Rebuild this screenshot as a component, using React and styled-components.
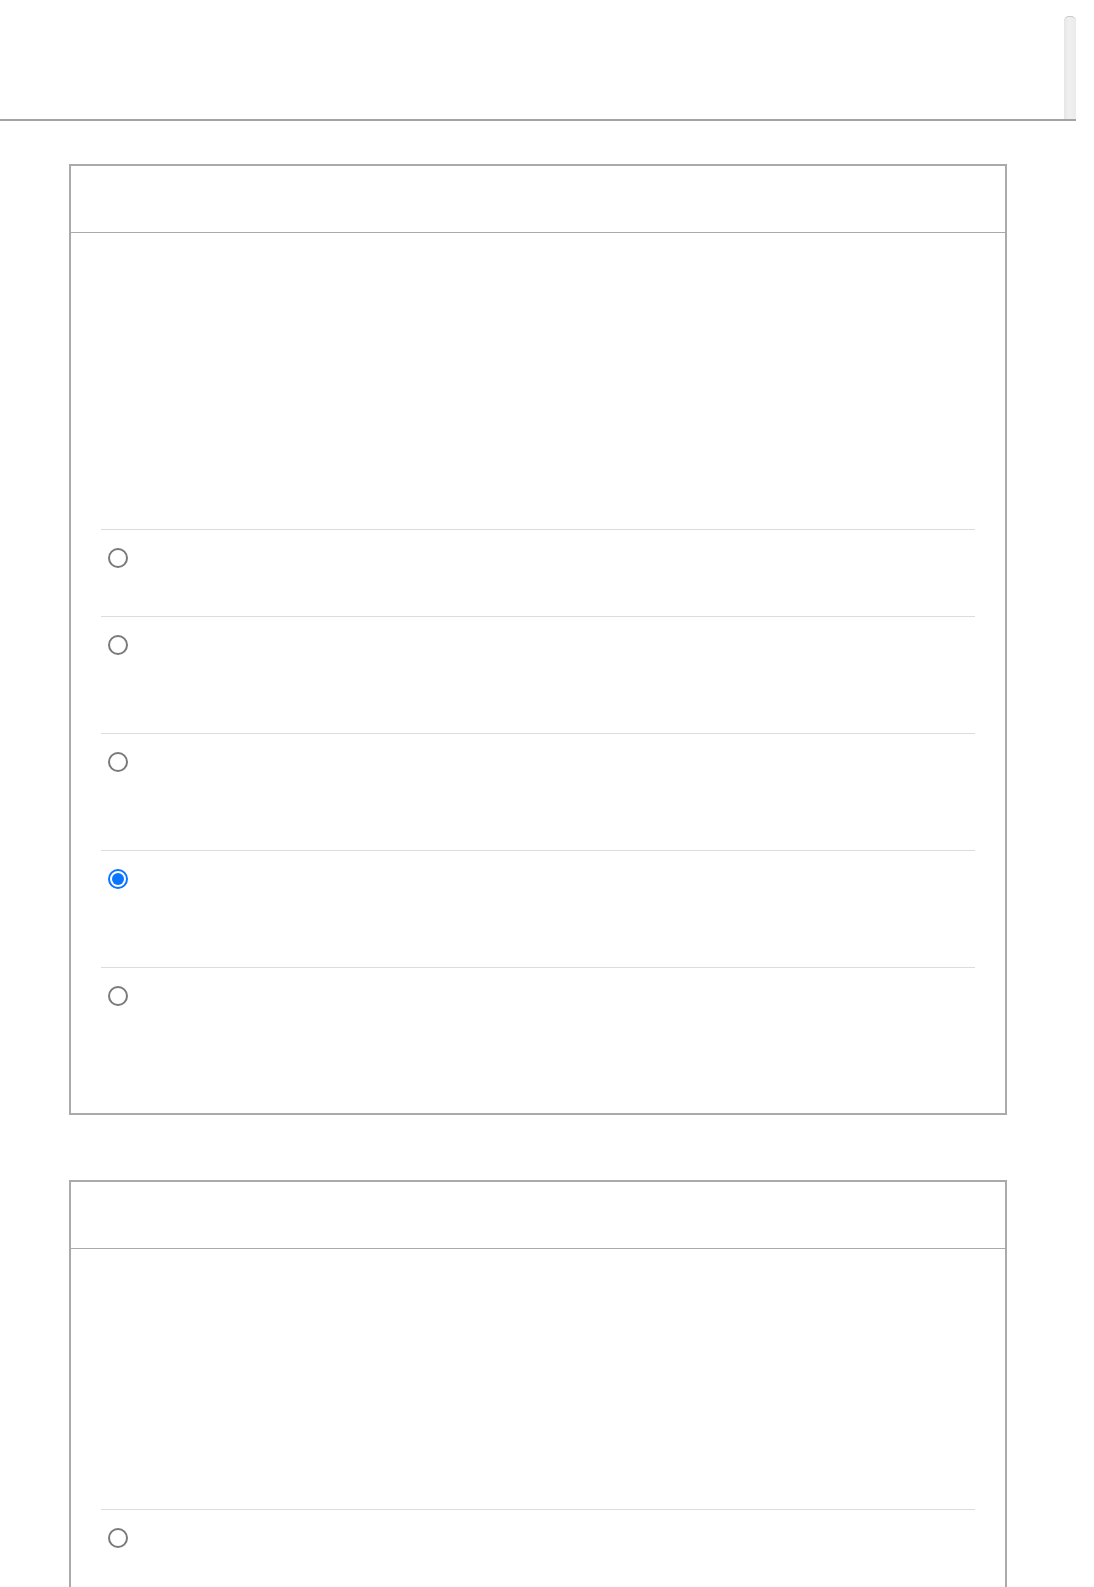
import styled, { createGlobalStyle } from "styled-components";

const GlobalStyle = createGlobalStyle`
  body {
    margin: 0;
    background: #ffffff;
    font-family: "Liberation Sans", Arial, sans-serif;
  }
`;

const Page = styled.div`
  width: 1094px;
  padding-bottom: 40px;
`;

const Header = styled.header`
  display: flex;
  width: 1076px;
  height: 119px;
  border-bottom: 2px solid #a3a3a3;
`;

const HeaderSpace = styled.div`
  flex: 1;
`;

const ScrollTrack = styled.div`
  width: 12px;
  margin-top: 16px;
  border-top: 1px solid #c8c8c8;
  background: linear-gradient(to right, #e6e6e6, #f0f0f0 40%, #ebebeb);
  border-radius: 5px 5px 0 0;
`;

const Main = styled.main`
  display: flex;
  flex-direction: column;
  gap: 65px;
  padding: 43px 0 0 69px;
`;

const Card = styled.section`
  width: 934px;
  border: 2px solid #aaaaaa;
`;

const CardHead = styled.div`
  height: 66px;
  border-bottom: 1px solid #aaaaaa;
`;

const CardBody = styled.div`
  padding: ${(p) => p.$top}px 30px ${(p) => p.$bottom}px 30px;
`;

const Row = styled.div`
  display: flex;
  align-items: flex-start;
  height: ${(p) => p.$h}px;
  border-top: 1px solid #dcdcdc;
  padding: 18px 0 0 7px;
  box-sizing: border-box;
`;

const Radio = styled.span`
  width: 20px;
  height: 20px;
  box-sizing: border-box;
  border-radius: 50%;
  border: 2px solid ${(p) => (p.$on ? "#0a75ff" : "#7a7a7a")};
  display: flex;
  align-items: center;
  justify-content: center;

  &::after {
    content: "";
    display: ${(p) => (p.$on ? "block" : "none")};
    width: 12px;
    height: 12px;
    border-radius: 50%;
    background: #0a75ff;
  }
`;

const firstRows = [
  { h: 87 },
  { h: 117 },
  { h: 117 },
  { h: 117, on: true },
  { h: 117 },
];

const App = () => {
  return (
    <Page>
      <GlobalStyle />
      <Header>
        <HeaderSpace />
        <ScrollTrack />
      </Header>
      <Main>
        <Card>
          <CardHead />
          <CardBody $top={296} $bottom={29}>
            {firstRows.map((r, i) => (
              <Row key={i} $h={r.h}>
                <Radio $on={r.on} />
              </Row>
            ))}
          </CardBody>
        </Card>
        <Card>
          <CardHead />
          <CardBody $top={260} $bottom={29}>
            <Row $h={117}>
              <Radio />
            </Row>
          </CardBody>
        </Card>
      </Main>
    </Page>
  );
};

export default App;
